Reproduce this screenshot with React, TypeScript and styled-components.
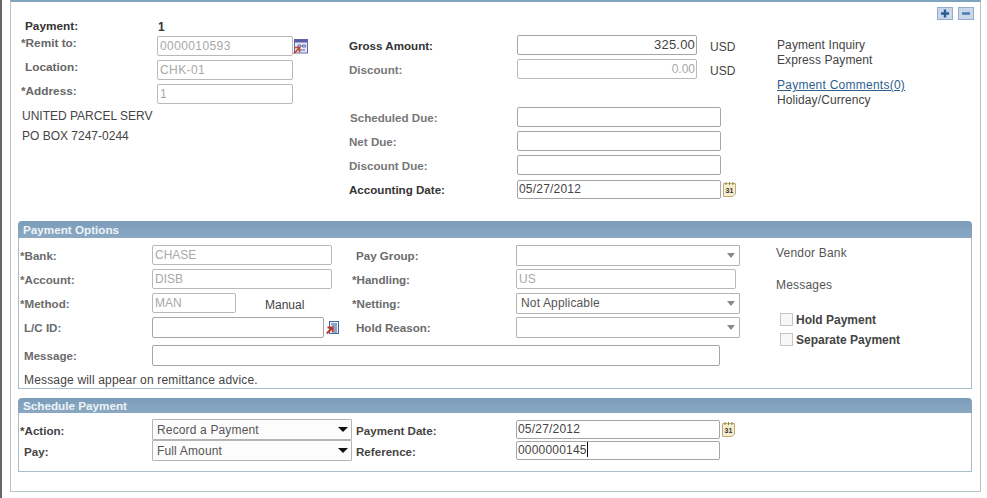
import React from "react";
import styled, { createGlobalStyle } from "styled-components";

const GlobalStyle = createGlobalStyle`
  html, body {
    margin: 0;
    padding: 0;
    background: #fff;
    font-family: "Liberation Sans", Arial, sans-serif;
    font-size: 12px;
    color: #444;
  }
  * { box-sizing: border-box; }
`;

const Page = styled.div`
  width: 987px;
  height: 498px;
  border-left: 2px solid #666;
  padding-left: 8px;
  overflow: hidden;
`;
const Panel = styled.div`
  width: 971px;
  height: 492px;
  border: 1px solid #b5c3cb;
  border-top: 2px solid #7ea3bd;
`;

const TopArea = styled.div`
  display: flex;
  height: 219px;
`;
const PayeeColumn = styled.div`
  width: 338px;
  padding: 17px 0 0 10px;
`;
const AmountColumn = styled.div`
  width: 428px;
  padding-top: 31px;
`;
const LinksColumn = styled.div`
  flex: 1;
  padding: 5px 6px 0 0;
`;

const PayeeRow = styled.div<{ $height?: number }>`
  display: flex;
  align-items: flex-start;
  height: ${(p) => p.$height ?? 24}px;
`;
const PayeeLabel = styled.label<{ $plain?: boolean; $dark?: boolean }>`
  width: 136px;
  padding-left: ${(p) => (p.$plain ? 4 : 0)}px;
  font-size: 11.8px;
  line-height: 14px;
  font-weight: bold;
  color: ${(p) => (p.$dark ? "#333" : "#666")};
`;
const PaymentNumber = styled.span`
  margin: 1px 0 0 1px;
  line-height: 14px;
  font-weight: bold;
  color: #333;
`;
const AddressLine = styled.div`
  padding-left: 1px;
  line-height: 20px;
  color: #444;
`;

const AmountRow = styled.div<{ $gap?: number }>`
  display: flex;
  align-items: center;
  height: 24px;
  margin-top: ${(p) => p.$gap ?? 0}px;
`;
const AmountLabel = styled.label<{ $dark?: boolean; $nudge?: number }>`
  width: 168px;
  padding-left: ${(p) => p.$nudge ?? 0}px;
  font-size: 11.6px;
  font-weight: bold;
  color: ${(p) => (p.$dark ? "#333" : "#777")};
`;
const Currency = styled.span`
  margin-left: 13px;
  padding-top: 3px;
  color: #444;
`;

const Field = styled.div<{
  $width: number;
  $height?: number;
  $off?: boolean;
  $right?: boolean;
  $large?: boolean;
}>`
  flex: none;
  width: ${(p) => p.$width}px;
  height: ${(p) => p.$height ?? 20}px;
  border: 1px solid ${(p) => (p.$off ? "#b9b9b9" : "#a6a6a6")};
  border-radius: 2px;
  padding: 0 1px 0 ${(p) => (p.$off ? 2 : 1)}px;
  font-size: ${(p) => (p.$large ? 13 : 12)}px;
  letter-spacing: ${(p) => (p.$off ? 0 : 0.2)}px;
  line-height: ${(p) => (p.$height ?? 20) - 2}px;
  text-align: ${(p) => (p.$right ? "right" : "left")};
  color: ${(p) => (p.$off ? "#a8a8a8" : "#444")};
  background: #fff;
`;
const PayeeField = styled(Field)`
  letter-spacing: 0.4px;
`;
const Caret = styled.span`
  display: inline-block;
  width: 1px;
  height: 15px;
  margin-bottom: -3px;
  background: #111;
`;

const DropBox = styled.div<{ $width: number; $height?: number; $solid?: boolean }>`
  flex: none;
  display: flex;
  align-items: center;
  justify-content: space-between;
  width: ${(p) => p.$width}px;
  height: ${(p) => p.$height ?? 21}px;
  border: 1px solid #b4b4b4;
  border-radius: 1px;
  padding: 0 ${(p) => (p.$solid ? 3 : 4)}px 0 4px;
  letter-spacing: 0.15px;
  color: #555;
  background: ${(p) => (p.$solid ? "#fcfcfc" : "#fff")};
`;
const DropArrow = styled.span<{ $solid?: boolean }>`
  width: 0;
  height: 0;
  border-style: solid;
  border-width: ${(p) => (p.$solid ? "5px 5px 0" : "5px 4px 0")};
  border-color: ${(p) => (p.$solid ? "#111" : "#888")} transparent transparent;
`;

const IconBar = styled.div`
  display: flex;
  justify-content: flex-end;
  gap: 5px;
  margin-bottom: 18px;
`;
const ToggleButton = styled.button`
  display: flex;
  align-items: center;
  justify-content: center;
  width: 16px;
  height: 13px;
  padding: 0;
  border: 1px solid #93acd0;
  background: #c8d8ea;
`;
const LinkGroup = styled.div`
  margin-bottom: 10px;
`;
const SideLink = styled.div<{ $active?: boolean }>`
  line-height: 15px;
  letter-spacing: ${(p) => (p.$active ? 0.25 : 0.1)}px;
  color: ${(p) => (p.$active ? "#2e5f8f" : "#444")};
  text-decoration: ${(p) => (p.$active ? "underline" : "none")};
`;

const Section = styled.section<{ $top?: number }>`
  width: 954px;
  margin: ${(p) => p.$top ?? 0}px 0 0 7px;
`;
const SectionHeader = styled.h3<{ $height: number }>`
  margin: 0;
  height: ${(p) => p.$height}px;
  padding: 1px 0 0 5px;
  border-radius: 4px 4px 0 0;
  background: linear-gradient(#7b9dba, #8aa8c2);
  font-size: 11.7px;
  line-height: ${(p) => p.$height - 1}px;
  color: #eef3f7;
`;
const SectionBody = styled.div<{ $height: number }>`
  height: ${(p) => p.$height}px;
  border: 1px solid #a9bcc8;
  border-top: 0;
`;

const OptionsGrid = styled.div`
  display: grid;
  grid-template-columns: 133px 199px 165px 260px 1fr;
  grid-auto-rows: 24px;
  padding-top: 5px;
`;
const ScheduleGrid = styled.div`
  display: grid;
  grid-template-columns: 133px 199px 165px 1fr;
  grid-auto-rows: 21px;
  padding-top: 6px;
`;
const Cell = styled.div`
  display: flex;
  align-items: center;
`;
const FormLabel = styled.label<{ $plain?: boolean; $dark?: boolean }>`
  display: flex;
  align-items: center;
  padding-left: ${(p) => (p.$plain ? 5 : 1)}px;
  font-size: 11.6px;
  font-weight: bold;
  color: ${(p) => (p.$dark ? "#444" : "#6b6b6b")};
`;
const ScheduleLabel = styled(FormLabel)`
  padding-top: 1px;
`;
const MethodText = styled.span`
  margin-left: 29px;
  padding-top: 3px;
  color: #444;
`;
const OptionsAside = styled.aside`
  grid-column: 5;
  grid-row: 1 / span 4;
  padding-top: 3px;
`;
const AsideLink = styled.div`
  margin-bottom: 17px;
  line-height: 15px;
  letter-spacing: 0.2px;
  color: #555;
`;
const CheckGroup = styled.div`
  display: flex;
  flex-direction: column;
  gap: 7px;
  margin: 20px 0 0 4px;
`;
const CheckRow = styled.div`
  display: flex;
  align-items: center;
  gap: 3px;
  height: 13px;
  font-weight: bold;
  color: #444;
`;
const CheckBox = styled.span`
  width: 13px;
  height: 13px;
  border: 1px solid #c4c4c4;
  background: #f7f7f7;
`;
const MessageLabel = styled(FormLabel)`
  margin-top: 8px;
`;
const MessageCell = styled(Cell)`
  grid-column: 2 / -1;
  align-items: flex-start;
  margin-top: 6px;
`;
const NoteRow = styled.div`
  grid-column: 1 / -1;
  padding: 10px 0 0 5px;
  line-height: 14px;
  letter-spacing: 0.17px;
  color: #444;
`;

const PlusIcon = () => (
  <svg width="14" height="11" viewBox="0 0 14 11">
    <path d="M3 5.500h8M7 1.500v8" stroke="#2c5c94" strokeWidth="2.4" />
  </svg>
);
const MinusIcon = () => (
  <svg width="14" height="11" viewBox="0 0 14 11">
    <path d="M3 5.500h8" stroke="#4a78a8" strokeWidth="2.4" />
  </svg>
);

const PromptIcon = () => (
  <svg width="15" height="15" viewBox="0 0 15 15" style={{ marginTop: 3 }}>
    <rect x="1.500" y="0.500" width="13" height="13.500" fill="#e6e8f6" stroke="#6468ac" />
    <rect x="1.500" y="0.500" width="13" height="3" fill="#5a5fa8" />
    <path d="M5 6h3v2H5zM9.500 6h3v2h-3zM7 11h5" fill="none" stroke="#6468ac" />
    <path d="M0.800 14.500l5-5M1.800 8.500H6.500V13" fill="none" stroke="#c0482f" strokeWidth="1.700" />
  </svg>
);
const ListPromptIcon = () => (
  <svg width="13" height="13" viewBox="0 0 13 13" style={{ marginLeft: 2 }}>
    <rect x="3.500" y="0.500" width="9" height="12" fill="#eef1fa" stroke="#3f6aa8" />
    <path d="M5 3h6M6 5h5M8 7h3M8 9h3M8 11h3" stroke="#2f5a9a" />
    <path d="M0.700 12.500l5.500-5.500M1.500 6.500H6.800V11.500" fill="none" stroke="#b8392a" strokeWidth="1.900" />
  </svg>
);
const CalendarIcon = () => (
  <svg width="13" height="15" viewBox="0 0 13 15" style={{ marginLeft: 2 }}>
    <path d="M0.500 1.500h12v10.500l-2.500 2.500H0.500z" fill="#f5edcd" stroke="#bdae7c" />
    <path d="M3 0v3M6.500 0v3M10 0v3" stroke="#8d7c4a" />
    <text x="2.500" y="10.500" fontFamily="Liberation Sans, sans-serif" fontSize="7" fontWeight="bold" fill="#333">
      31
    </text>
  </svg>
);

export default function App() {
  return (
    <Page>
      <GlobalStyle />
      <Panel>
        <TopArea>
          <PayeeColumn>
            <PayeeRow $height={17}>
              <PayeeLabel $plain $dark>Payment:</PayeeLabel>
              <PaymentNumber>1</PaymentNumber>
            </PayeeRow>
            <PayeeRow>
              <PayeeLabel>*Remit to:</PayeeLabel>
              <PayeeField $width={136} $off>0000010593</PayeeField>
              <PromptIcon />
            </PayeeRow>
            <PayeeRow>
              <PayeeLabel $plain>Location:</PayeeLabel>
              <PayeeField $width={136} $off>CHK-01</PayeeField>
            </PayeeRow>
            <PayeeRow $height={22}>
              <PayeeLabel>*Address:</PayeeLabel>
              <PayeeField $width={136} $off>1</PayeeField>
            </PayeeRow>
            <AddressLine>UNITED PARCEL SERV</AddressLine>
            <AddressLine>PO BOX 7247-0244</AddressLine>
          </PayeeColumn>

          <AmountColumn>
            <AmountRow>
              <AmountLabel $dark>Gross Amount:</AmountLabel>
              <Field $width={180} $right $large>325.00</Field>
              <Currency>USD</Currency>
            </AmountRow>
            <AmountRow>
              <AmountLabel>Discount:</AmountLabel>
              <Field $width={180} $right $off>0.00</Field>
              <Currency>USD</Currency>
            </AmountRow>
            <AmountRow $gap={24}>
              <AmountLabel $nudge={1}>Scheduled Due:</AmountLabel>
              <Field $width={204} />
            </AmountRow>
            <AmountRow>
              <AmountLabel>Net Due:</AmountLabel>
              <Field $width={204} />
            </AmountRow>
            <AmountRow>
              <AmountLabel>Discount Due:</AmountLabel>
              <Field $width={204} />
            </AmountRow>
            <AmountRow>
              <AmountLabel $dark>Accounting Date:</AmountLabel>
              <Field $width={204} $height={19}>05/27/2012</Field>
              <CalendarIcon />
            </AmountRow>
          </AmountColumn>

          <LinksColumn>
            <IconBar>
              <ToggleButton aria-label="Expand"><PlusIcon /></ToggleButton>
              <ToggleButton aria-label="Collapse"><MinusIcon /></ToggleButton>
            </IconBar>
            <LinkGroup>
              <SideLink>Payment Inquiry</SideLink>
              <SideLink>Express Payment</SideLink>
            </LinkGroup>
            <SideLink $active>Payment Comments(0)</SideLink>
            <SideLink>Holiday/Currency</SideLink>
          </LinksColumn>
        </TopArea>

        <Section>
          <SectionHeader $height={17}>Payment Options</SectionHeader>
          <SectionBody $height={151}>
            <OptionsGrid>
              <FormLabel>*Bank:</FormLabel>
              <Cell><Field $width={180} $off>CHASE</Field></Cell>
              <FormLabel $plain>Pay Group:</FormLabel>
              <Cell>
                <DropBox $width={224}><span /><DropArrow /></DropBox>
              </Cell>
              <OptionsAside>
                <AsideLink>Vendor Bank</AsideLink>
                <AsideLink>Messages</AsideLink>
                <CheckGroup>
                  <CheckRow><CheckBox />Hold Payment</CheckRow>
                  <CheckRow><CheckBox />Separate Payment</CheckRow>
                </CheckGroup>
              </OptionsAside>

              <FormLabel>*Account:</FormLabel>
              <Cell><Field $width={180} $off>DISB</Field></Cell>
              <FormLabel>*Handling:</FormLabel>
              <Cell><Field $width={220} $off>US</Field></Cell>

              <FormLabel>*Method:</FormLabel>
              <Cell>
                <Field $width={84} $off>MAN</Field>
                <MethodText>Manual</MethodText>
              </Cell>
              <FormLabel>*Netting:</FormLabel>
              <Cell>
                <DropBox $width={224}>Not Applicable<DropArrow /></DropBox>
              </Cell>

              <FormLabel $plain>L/C ID:</FormLabel>
              <Cell>
                <Field $width={172} $height={21} />
                <ListPromptIcon />
              </Cell>
              <FormLabel $plain>Hold Reason:</FormLabel>
              <Cell>
                <DropBox $width={224}><span /><DropArrow /></DropBox>
              </Cell>

              <MessageLabel $plain>Message:</MessageLabel>
              <MessageCell><Field $width={568} $height={21} /></MessageCell>
              <NoteRow>Message will appear on remittance advice.</NoteRow>
            </OptionsGrid>
          </SectionBody>
        </Section>

        <Section $top={9}>
          <SectionHeader $height={15}>Schedule Payment</SectionHeader>
          <SectionBody $height={59}>
            <ScheduleGrid>
              <ScheduleLabel $dark>*Action:</ScheduleLabel>
              <Cell>
                <DropBox $width={200} $solid>Record a Payment<DropArrow $solid /></DropBox>
              </Cell>
              <ScheduleLabel $plain $dark>Payment Date:</ScheduleLabel>
              <Cell>
                <Field $width={204} $height={19}>05/27/2012</Field>
                <CalendarIcon />
              </Cell>

              <ScheduleLabel $plain $dark>Pay:</ScheduleLabel>
              <Cell>
                <DropBox $width={200} $solid>Full Amount<DropArrow $solid /></DropBox>
              </Cell>
              <ScheduleLabel $plain $dark>Reference:</ScheduleLabel>
              <Cell>
                <Field $width={204} $height={19}>0000000145<Caret /></Field>
              </Cell>
            </ScheduleGrid>
          </SectionBody>
        </Section>
      </Panel>
    </Page>
  );
}
